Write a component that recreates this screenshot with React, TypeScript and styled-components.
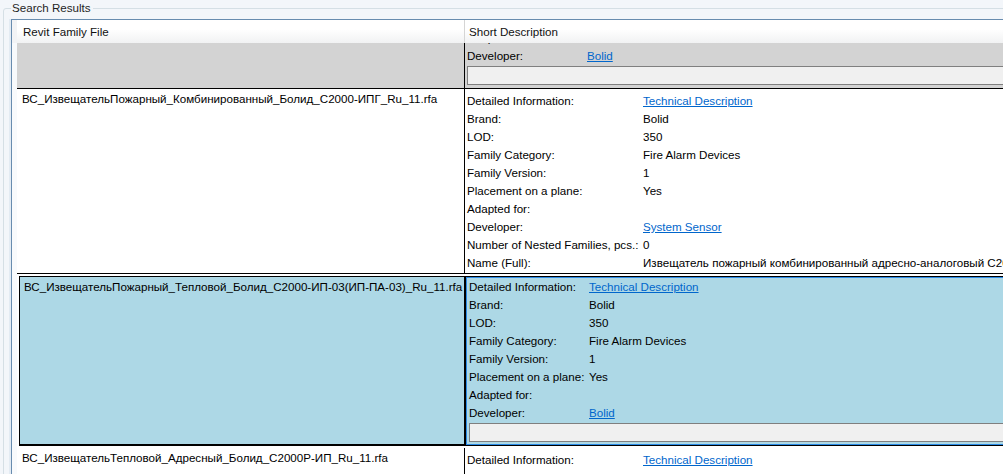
import { Fragment } from "react";
import styled, { createGlobalStyle } from "styled-components";

const GlobalStyle = createGlobalStyle`
  html, body {
    margin: 0;
    padding: 0;
  }
  body {
    background: #f3f6fa;
    font-family: "Liberation Sans", Arial, sans-serif;
    font-size: 11.6px;
    color: #000;
    overflow: hidden;
  }
  #root {
    width: 1003px;
    height: 474px;
    overflow: hidden;
  }
`;

const GroupBox = styled.fieldset`
  box-sizing: border-box;
  width: 1100px;
  height: 500px;
  margin: 0 0 0 3px;
  padding: 3px 0 0 7px;
  border: 1px solid #d5dfe5;
  border-radius: 3px 0 0 0;
  min-width: 0;
`;

const Legend = styled.legend`
  padding: 0 2px 0 1px;
  line-height: 16px;
  color: #1e1e1e;
`;

const Grid = styled.div`
  width: 1100px;
  border: 1px solid #688caf;
  background: #fff;
  box-shadow: -2px 0 0 #e3ebf3;
`;

const HeaderRow = styled.div`
  display: flex;
  height: 23px;
  background: linear-gradient(#ffffff, #ffffff 40%, #f1f2f3);
`;

const Corner = styled.div`
  width: 5px;
  flex: none;
  background: #f2f3f5;
`;

const HeaderCell = styled.div<{ $w?: number }>`
  box-sizing: border-box;
  width: ${(p) => (p.$w ? `${p.$w}px` : "auto")};
  flex: ${(p) => (p.$w ? "none" : "1")};
  padding-left: ${(p) => (p.$w ? "6px" : "4px")};
  border-right: ${(p) => (p.$w ? "1px solid #d5d5d5" : "none")};
  line-height: 24px;
  color: #111;
  white-space: nowrap;
`;

const Row = styled.div`
  display: flex;
`;

const RowHeader = styled.div`
  width: 5px;
  flex: none;
  background: #f8fafc;
`;

const Cells = styled.div<{ $selected?: boolean; $bg?: string }>`
  flex: 1;
  display: grid;
  grid-template-columns: ${(p) => (p.$selected ? "447px" : "448px")} 1fr;
  background: ${(p) => p.$bg ?? "#fff"};
  margin: ${(p) => (p.$selected ? "2px 0 2px 2px" : "0")};
  border-bottom: ${(p) => (p.$selected ? "none" : "1px solid #000")};
`;

const FileCell = styled.div<{ $selected?: boolean }>`
  box-sizing: border-box;
  padding: ${(p) => (p.$selected ? "2px 0 2px 4px" : "2px 5px")};
  border: ${(p) => (p.$selected ? "1px solid #000" : "none")};
  border-right: ${(p) => (p.$selected ? "2px" : "1px")} solid #000;
  border-bottom-width: ${(p) => (p.$selected ? "2px" : "0")};
  line-height: 16px;
  white-space: nowrap;
  overflow: hidden;
`;

const InfoCell = styled.div<{ $selected?: boolean; $h?: number }>`
  box-sizing: border-box;
  height: ${(p) => (p.$h ? `${p.$h}px` : "auto")};
  display: flex;
  flex-direction: column;
  justify-content: ${(p) => (p.$h ? "flex-end" : "flex-start")};
  overflow: hidden;
  padding: ${(p) => (p.$selected ? "1px 0 3px 3px" : p.$h ? "0 0 3px 2px" : "3px 0 1px 2px")};
  border-top: ${(p) => (p.$selected ? "1px solid #000" : "none")};
  border-bottom: ${(p) => (p.$selected ? "1px solid #000" : "none")};
  box-shadow: ${(p) => (p.$selected ? "inset 0 0 0 1px #2b8be6" : "none")};
`;

const InfoGrid = styled.div<{ $label: number }>`
  flex: none;
  display: grid;
  grid-template-columns: ${(p) => p.$label}px auto;
  grid-auto-rows: 18px;
  line-height: 18px;
  white-space: nowrap;
`;

const Label = styled.span``;

const Value = styled.span``;

const Link = styled.a`
  color: #0066cc;
  text-decoration: underline;
  cursor: pointer;
`;

const TextBox = styled.div`
  flex: none;
  box-sizing: border-box;
  height: 19px;
  margin-top: 1px;
  border: 1px solid #7f7f7f;
  background: #f0f0f0;
`;

type Item = { label: string; value?: string; link?: boolean };

const TECH: Item = { label: "Detailed Information:", value: "Technical Description", link: true };

const row1: Item[] = [
  TECH,
  { label: "Brand:", value: "Bolid" },
  { label: "LOD:", value: "350" },
  { label: "Family Category:", value: "Fire Alarm Devices" },
  { label: "Family Version:", value: "1" },
  { label: "Placement on a plane:", value: "Yes" },
  { label: "Adapted for:" },
  { label: "Developer:", value: "System Sensor", link: true },
  { label: "Number of Nested Families, pcs.:", value: "0" },
  {
    label: "Name (Full):",
    value: "Извещатель пожарный комбинированный адресно-аналоговый С2000-ИПГ",
  },
];

const bolidItems: Item[] = [
  TECH,
  { label: "Brand:", value: "Bolid" },
  { label: "LOD:", value: "350" },
  { label: "Family Category:", value: "Fire Alarm Devices" },
  { label: "Family Version:", value: "1" },
  { label: "Placement on a plane:", value: "Yes" },
  { label: "Adapted for:" },
  { label: "Developer:", value: "Bolid", link: true },
];

function Info({ items, label }: { items: Item[]; label: number }) {
  return (
    <InfoGrid $label={label}>
      {items.map((it, i) => (
        <Fragment key={i}>
          <Label>{it.label}</Label>
          <Value>{it.link ? <Link>{it.value}</Link> : it.value}</Value>
        </Fragment>
      ))}
    </InfoGrid>
  );
}

export default function App() {
  return (
    <>
      <GlobalStyle />
      <GroupBox>
        <Legend>Search Results</Legend>
        <Grid>
          <HeaderRow>
            <Corner />
            <HeaderCell $w={448}>Revit Family File</HeaderCell>
            <HeaderCell>Short Description</HeaderCell>
          </HeaderRow>

          {/* row scrolled partly out of view */}
          <Row>
            <RowHeader />
            <Cells $bg="#d3d3d3">
              <FileCell />
              <InfoCell $h={45}>
                <Info items={bolidItems.slice(-2)} label={120} />
                <TextBox />
              </InfoCell>
            </Cells>
          </Row>

          <Row>
            <RowHeader />
            <Cells>
              <FileCell>ВС_ИзвещательПожарный_Комбинированный_Болид_С2000-ИПГ_Ru_11.rfa</FileCell>
              <InfoCell>
                <Info items={row1} label={176} />
              </InfoCell>
            </Cells>
          </Row>

          <Row>
            <RowHeader />
            <Cells $selected $bg="#add8e6">
              <FileCell $selected>ВС_ИзвещательПожарный_Тепловой_Болид_С2000-ИП-03(ИП-ПА-03)_Ru_11.rfa</FileCell>
              <InfoCell $selected>
                <Info items={bolidItems} label={120} />
                <TextBox />
              </InfoCell>
            </Cells>
          </Row>

          <Row>
            <RowHeader />
            <Cells>
              <FileCell>ВС_ИзвещательТепловой_Адресный_Болид_С2000Р-ИП_Ru_11.rfa</FileCell>
              <InfoCell>
                <Info
                  items={[
                    TECH,
                    { label: "Brand:", value: "Bolid" },
                    { label: "LOD:", value: "350" },
                  ]}
                  label={176}
                />
              </InfoCell>
            </Cells>
          </Row>
        </Grid>
      </GroupBox>
    </>
  );
}
